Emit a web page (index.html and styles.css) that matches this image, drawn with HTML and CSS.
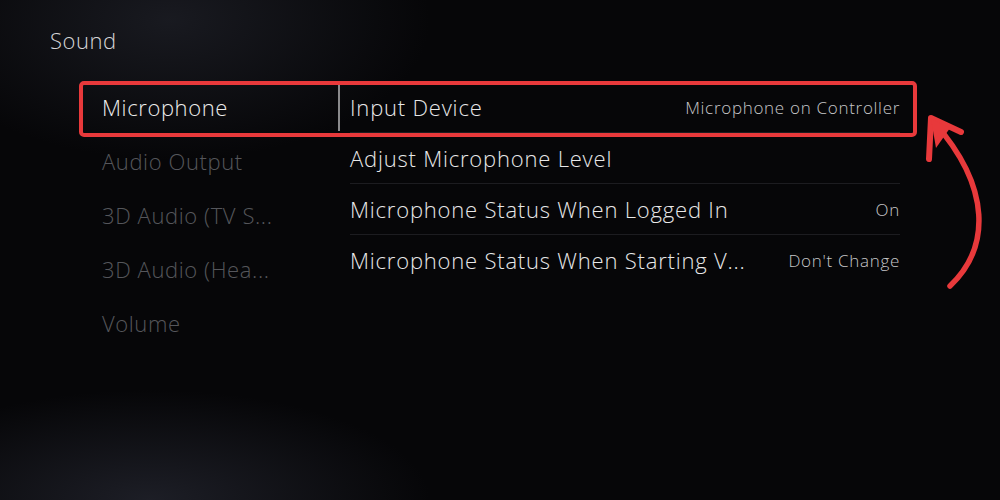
FILE: index.html
```html
<!DOCTYPE html>
<html lang="en">

<head>
    <meta charset="UTF-8">
    <meta name="viewport" content="width=device-width, initial-scale=1.0">
    <title>Sound</title>
    <link rel="stylesheet" href="styles.css">
</head>

<body>

    <div class="screen">
        <h1 class="title">Sound</h1>

        <div class="panel">
            <ul class="menu">
                <li class="menu-item selected">Microphone</li>
                <li class="menu-item">Audio Output</li>
                <li class="menu-item">3D Audio (TV S...</li>
                <li class="menu-item">3D Audio (Hea...</li>
                <li class="menu-item">Volume</li>
            </ul>

            <ul class="options">
                <li class="option">
                    <span class="label">Input Device</span>
                    <span class="value">Microphone on Controller</span>
                </li>
                <li class="option">
                    <span class="label">Adjust Microphone Level</span>
                </li>
                <li class="option">
                    <span class="label">Microphone Status When Logged In</span>
                    <span class="value">On</span>
                </li>
                <li class="option">
                    <span class="label">Microphone Status When Starting V...</span>
                    <span class="value">Don't Change</span>
                </li>
            </ul>

            <!-- annotation drawn over the screenshot -->
            <div class="highlight"></div>
            <svg class="arrow" width="80" height="200" viewBox="920 110 80 200">
                <path d="M950 288 C 990 250, 992 190, 934 124" fill="none" stroke="#e8393b" stroke-width="5.5" stroke-linecap="round" />
                <path d="M929 161 L931 120 L961 134" fill="none" stroke="#e8393b" stroke-width="6" stroke-linecap="round" stroke-linejoin="round" />
                <path d="M931 121 L936 150 L950 130 Z" fill="#e8393b" />
            </svg>
        </div>
    </div>

</body>

</html>
```

FILE: styles.css
```css
body {
    margin: 0;
    background: #060608;
    font-family: "Open Sans", "Noto Sans", sans-serif;
    font-weight: 300;
}

.screen {
    width: 1000px;
    height: 500px;
    box-sizing: border-box;
    padding: 27px 0 0 50px;
    background:
        radial-gradient(ellipse 260px 140px at 170px 20px, rgba(40, 42, 52, 0.55), transparent),
        radial-gradient(ellipse 280px 110px at 150px 500px, rgba(44, 46, 58, 0.6), transparent),
        #060608;
    overflow: hidden;
}

.title {
    margin: 0;
    font-size: 22px;
    font-weight: 300;
    letter-spacing: 0.5px;
    line-height: 26px;
    color: #d6d6d8;
}

.panel {
    position: relative;
    display: flex;
    margin-top: 27px;
    margin-left: 30px;
}

.menu,
.options {
    list-style: none;
    margin: 0;
    padding: 0;
}

.menu {
    width: 260px;
}

.menu-item {
    height: 54px;
    line-height: 54px;
    padding-left: 22px;
    font-size: 22px;
    letter-spacing: 0.6px;
    color: #55565b;
}

.menu-item.selected {
    color: #ececec;
    position: relative;
}

.menu-item.selected::after {
    content: "";
    position: absolute;
    right: 0;
    top: 4px;
    bottom: 3px;
    width: 2px;
    background: #8a8a8c;
}

.options {
    width: 550px;
    padding-left: 10px;
    padding-top: 1px;
}

.option {
    display: flex;
    justify-content: space-between;
    align-items: center;
    height: 51px;
    box-sizing: border-box;
}

.option + .option {
    border-top: 1px solid #1c1c20;
}

.label {
    font-size: 22px;
    letter-spacing: 0.8px;
    color: #e8e8e8;
}

.value {
    font-size: 17px;
    letter-spacing: 0.7px;
    color: #c6c6c8;
    padding-top: 1px;
}

.highlight {
    position: absolute;
    left: -1px;
    top: 1px;
    width: 838px;
    height: 56px;
    box-sizing: border-box;
    border: 4px solid #e8393b;
    border-radius: 5px;
}

.arrow {
    position: absolute;
    left: 840px;
    top: 28px;
}
```
